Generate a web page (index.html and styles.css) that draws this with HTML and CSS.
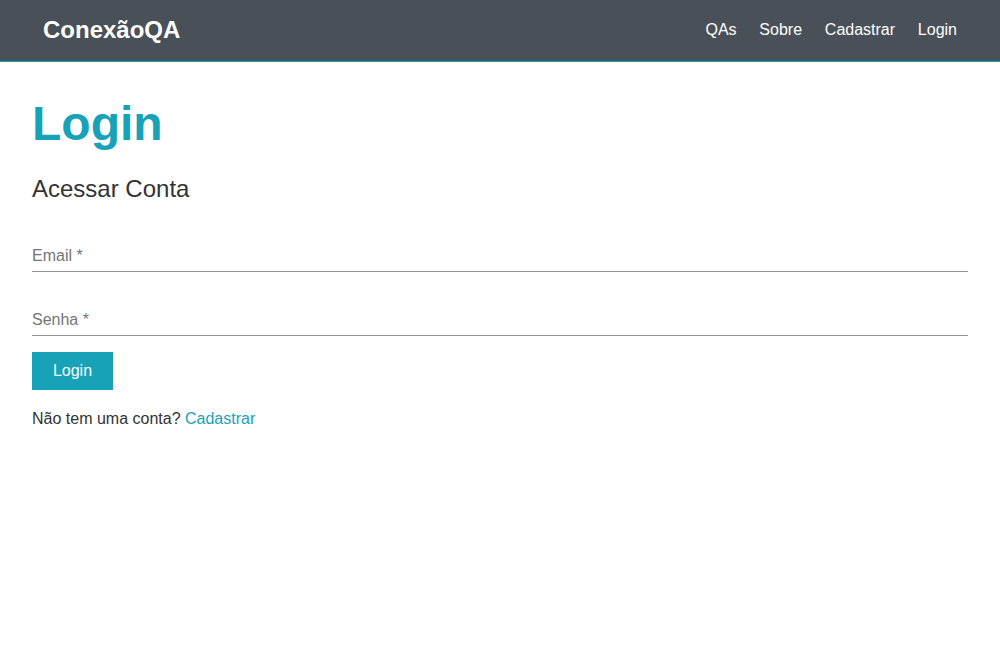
FILE: index.html
```html
<!DOCTYPE html>
<html lang="pt-BR">
<head>
<meta charset="utf-8">
<title>ConexãoQA - Login</title>
<link rel="stylesheet" href="styles.css">
</head>
<body>
<header class="navbar">
  <a class="brand" href="#">ConexãoQA</a>
  <nav class="nav">
    <a class="nav-link" href="#">QAs</a>
    <a class="nav-link" href="#">Sobre</a>
    <a class="nav-link" href="#">Cadastrar</a>
    <a class="nav-link" href="#">Login</a>
  </nav>
</header>
<main class="page">
  <h1 class="title">Login</h1>
  <p class="subtitle">Acessar Conta</p>
  <form class="form">
    <input class="field field-first" type="email" placeholder="Email *">
    <input class="field" type="password" placeholder="Senha *">
    <button class="btn" type="button">Login</button>
  </form>
  <p class="signup">Não tem uma conta? <a class="link" href="#">Cadastrar</a></p>
</main>
</body>
</html>
```
FILE: styles.css
```css
* { box-sizing: border-box; }
html, body { margin: 0; padding: 0; background: #fff; }
body {
  font-family: "Liberation Sans", Arial, sans-serif;
  color: #333;
  font-size: 16px;
  line-height: 20px;
}
.navbar {
  height: 62px;
  background: #495057;
  border-bottom: 1px solid #17a2b8;
  display: flex;
  align-items: center;
  justify-content: space-between;
  padding: 0 31.6px 2px 32px;
}
.brand {
  color: #fff;
  font-weight: bold;
  font-size: 24px;
  line-height: 28px;
  padding: 0 11px;
  text-decoration: none;
}
.nav { display: flex; }
.nav-link {
  color: #fff;
  text-decoration: none;
  font-size: 16px;
  line-height: 20px;
  padding: 0 11.4px;
}
.page { padding: 0 32px; }
.title {
  margin: 31px 0 0;
  font-size: 48px;
  line-height: 61px;
  font-weight: bold;
  color: #17a2b8;
}
.subtitle {
  margin: 20px 0 0;
  font-size: 24px;
  line-height: 29px;
  color: #333;
}
.form { display: flex; flex-direction: column; align-items: flex-start; }
.field {
  display: block;
  width: 100%;
  border: none;
  border-bottom: 1px solid #949494;
  outline: none;
  padding: 1px 0 5px;
  height: 27px;
  font-family: "Liberation Sans", Arial, sans-serif;
  font-size: 16px;
  line-height: 20px;
  color: #333;
  background: transparent;
  margin-top: 37px;
}
.field-first { margin-top: 42px; }
.field::placeholder { color: #757575; opacity: 1; }
.btn {
  margin-top: 16px;
  height: 38px;
  width: 81px;
  padding: 0;
  border: none;
  background: #17a2b8;
  color: #fff;
  font-family: "Liberation Sans", Arial, sans-serif;
  font-size: 16px;
  line-height: 20px;
  cursor: pointer;
}
.signup { margin: 19px 0 0; font-size: 16px; line-height: 20px; }
.link { color: #17a2b8; text-decoration: none; }
```
